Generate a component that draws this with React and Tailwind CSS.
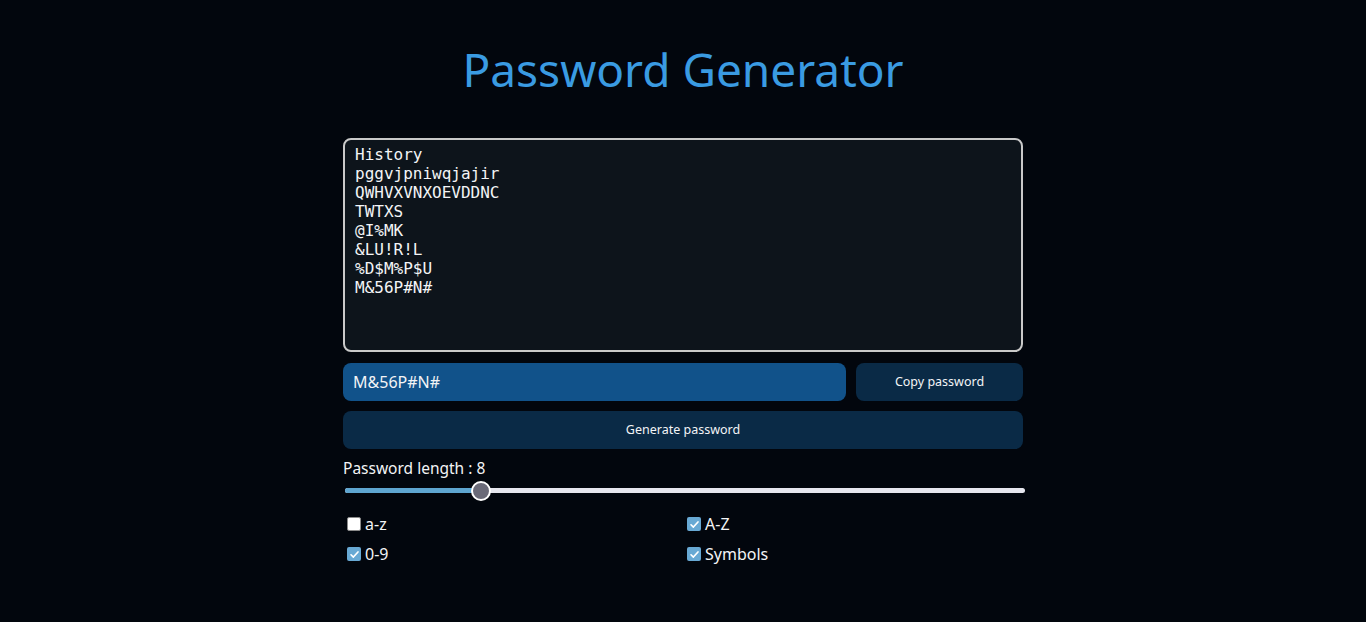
import React, { useState } from "react";

const history = [
  "pggvjpniwqjajir",
  "QWHVXVNXOEVDDNC",
  "TWTXS",
  "@I%MK",
  "&LU!R!L",
  "%D$M%P$U",
  "M&56P#N#",
];

function Check({ checked, label }) {
  return (
    <label className="flex items-center gap-[4px] text-[16px] text-gray-100">
      {checked ? (
        <span className="flex h-[14px] w-[14px] items-center justify-center rounded-[2px] bg-[#68a9d4]">
          <svg viewBox="0 0 12 12" className="h-[11px] w-[11px]">
            <path d="M2.2 6.3 L4.8 8.8 L9.8 3.2" fill="none" stroke="white" strokeWidth="1.8" strokeLinecap="round" strokeLinejoin="round" />
          </svg>
        </span>
      ) : (
        <span className="h-[14px] w-[14px] rounded-[2px] border border-[#8a8a8a] bg-white" />
      )}
      <span>{label}</span>
    </label>
  );
}

export default function App() {
  const [length] = useState(8);
  const pct = ((481 - 345) / 680) * 100;

  return (
    <div
      className="min-h-[622px] w-full bg-[#02060d] text-white"
      style={{ fontFamily: '"Noto Sans", "Open Sans", sans-serif' }}
    >
      <h1 className="pt-[37px] text-center text-[46px] leading-[64px] text-[#3a9be2]">
        Password Generator
      </h1>

      <div className="mx-auto mt-[37px] w-[680px]">
        <div
          className="h-[214px] w-full rounded-[8px] border-2 border-[#c9c9c9] bg-[#0d141b] px-[10px] pt-[5px] text-[16px] leading-[19px] text-gray-100"
          style={{ fontFamily: '"DejaVu Sans Mono", monospace' }}
        >
          <div>History</div>
          {history.map((h, i) => (
            <div key={i}>{h}</div>
          ))}
        </div>

        <div className="mt-[11px] flex gap-[10px]">
          <div className="flex h-[38px] flex-1 items-center rounded-[8px] bg-[#11528a] px-[10px] text-[16px] text-gray-100">
            M&amp;56P#N#
          </div>
          <button className="h-[38px] w-[167px] rounded-[8px] bg-[#0a2a46] text-[12.5px] text-gray-100">
            Copy password
          </button>
        </div>

        <button className="mt-[10px] h-[38px] w-full rounded-[8px] bg-[#0a2a46] text-[12.5px] text-gray-100">
          Generate password
        </button>

        <div className="mt-[8px] text-[15.5px] leading-[22px] text-gray-100">
          Password length : {length}
        </div>

        <div className="relative mt-[2px] h-[20px] w-[684px]">
          <div className="absolute left-[2px] top-[7px] h-[5px] w-[680px] rounded-full bg-[#e6e6ee]" />
          <div
            className="absolute left-[2px] top-[7px] h-[5px] rounded-full bg-[#5ea5d0]"
            style={{ width: `${pct}%` }}
          />
          <div className="absolute left-[128px] top-0 h-[20px] w-[20px] rounded-full border-2 border-white bg-[#6a6a78]" />
        </div>

        <div className="mt-[11px] grid grid-cols-[340px_1fr] gap-y-[6px] pl-[4px]">
          <Check checked={false} label="a-z" />
          <Check checked label="A-Z" />
          <Check checked label="0-9" />
          <Check checked label="Symbols" />
        </div>
      </div>
    </div>
  );
}
